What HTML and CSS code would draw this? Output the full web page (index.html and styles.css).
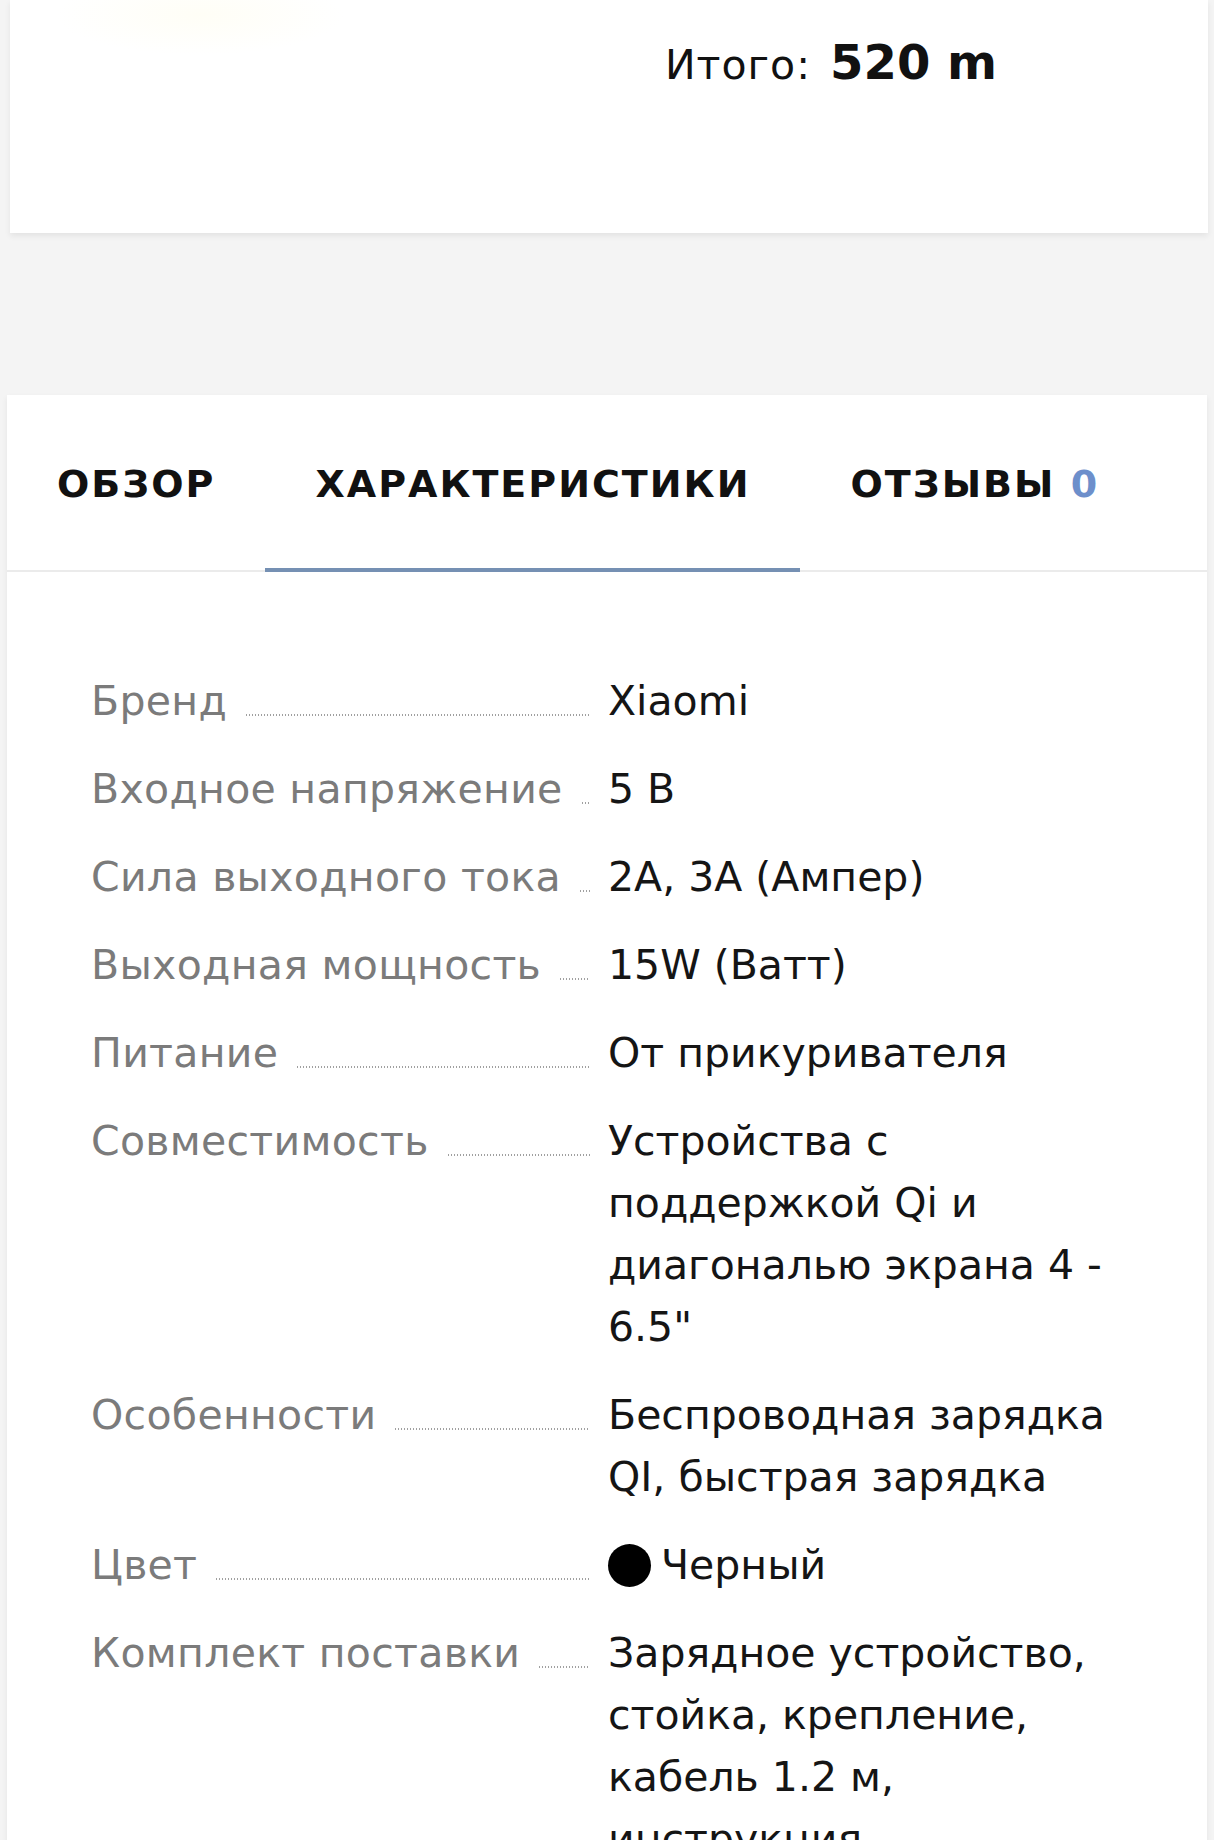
FILE: index.html
```html
<!DOCTYPE html>
<html lang="ru">
<head>
  <meta charset="UTF-8">
  <meta name="viewport" content="width=device-width, initial-scale=1.0">
  <title>Зарядное устройство Xiaomi</title>
  <link rel="stylesheet" href="styles.css">
</head>
<body>

  <div class="card total-card">
    <div class="total">
      <span class="total-label">Итого:</span>
      <span class="total-sum">520 m</span>
    </div>
  </div>

  <div class="card product-info">
    <nav class="tabs">
      <a class="tab" href="#overview">Обзор</a>
      <a class="tab active" href="#specs">Характеристики</a>
      <a class="tab" href="#reviews">Отзывы <span class="count">0</span></a>
    </nav>

    <dl class="specs" id="specs">
      <div class="spec-row">
        <dt><span>Бренд</span></dt>
        <dd>Xiaomi</dd>
      </div>
      <div class="spec-row">
        <dt><span>Входное напряжение</span></dt>
        <dd>5 В</dd>
      </div>
      <div class="spec-row">
        <dt><span>Сила выходного тока</span></dt>
        <dd>2А, 3А (Ампер)</dd>
      </div>
      <div class="spec-row">
        <dt><span>Выходная мощность</span></dt>
        <dd>15W (Ватт)</dd>
      </div>
      <div class="spec-row">
        <dt><span>Питание</span></dt>
        <dd>От прикуривателя</dd>
      </div>
      <div class="spec-row">
        <dt><span>Совместимость</span></dt>
        <dd>Устройства с поддержкой Qi и диагональю экрана 4 - 6.5"</dd>
      </div>
      <div class="spec-row">
        <dt><span>Особенности</span></dt>
        <dd>Беспроводная зарядка QI, быстрая зарядка</dd>
      </div>
      <div class="spec-row">
        <dt><span>Цвет</span></dt>
        <dd><i class="swatch"></i>Черный</dd>
      </div>
      <div class="spec-row">
        <dt><span>Комплект поставки</span></dt>
        <dd>Зарядное устройство, стойка, крепление, кабель 1.2 м, инструкция</dd>
      </div>
    </dl>
  </div>

</body>
</html>
```

FILE: styles.css
```css
body {
  margin: 0;
  background-color: #f4f4f4;
  font-family: 'DejaVu Sans', 'Noto Sans', sans-serif;
  color: #111;
}
.card {
  background-color: #fff;
  box-shadow: 0 3px 6px rgba(0, 0, 0, 0.07);
}
.total-card {
  height: 233px;
  margin: 0 6px 0 10px;
  background: radial-gradient(ellipse 180px 50px at 190px 15px, #fffef6, #fff 80%);
}
.total {
  padding: 38px 211px 0 0;
  text-align: right;
  line-height: 1;
}
.total-label {
  font-size: 41px;
  letter-spacing: 1px;
}
.total-sum {
  margin-left: 14px;
  font-size: 48px;
  font-weight: bold;
}
.product-info {
  margin: 162px 7px 0 7px;
  padding-bottom: 200px;
}
.tabs {
  display: flex;
  border-bottom: 2px solid #ebebeb;
}
.tab {
  padding: 70px 50px 65px;
  border-bottom: 4px solid transparent;
  margin-bottom: -2px;
  font-size: 38px;
  font-weight: bold;
  line-height: 1;
  letter-spacing: 2px;
  text-transform: uppercase;
  text-decoration: none;
  color: #111;
}
.tab.active {
  border-bottom-color: #7590b3;
}
.count {
  color: #6d8fcb;
}
.specs {
  margin: 0;
  padding: 98px 84px 0 84px;
}
.spec-row {
  display: grid;
  grid-template-columns: 499px 1fr;
  column-gap: 18px;
  margin-bottom: 26px;
  font-size: 41px;
  line-height: 62px;
}
.spec-row dt {
  display: flex;
  align-items: baseline;
  color: #7b7b7b;
  white-space: nowrap;
  letter-spacing: 0.3px;
}
.spec-row dt::after {
  content: "";
  flex: 1;
  min-width: 4px;
  height: 2px;
  margin-left: 18px;
  position: relative;
  top: 1px;
  background: radial-gradient(circle, #a0a0a0 0.8px, transparent 1.1px) left bottom / 3px 2px repeat-x;
}
.spec-row dd {
  margin: 0;
  color: #151515;
}
.swatch {
  display: inline-block;
  width: 43px;
  height: 43px;
  margin-right: 10px;
  border-radius: 50%;
  background-color: #000;
  vertical-align: -8px;
}
```
